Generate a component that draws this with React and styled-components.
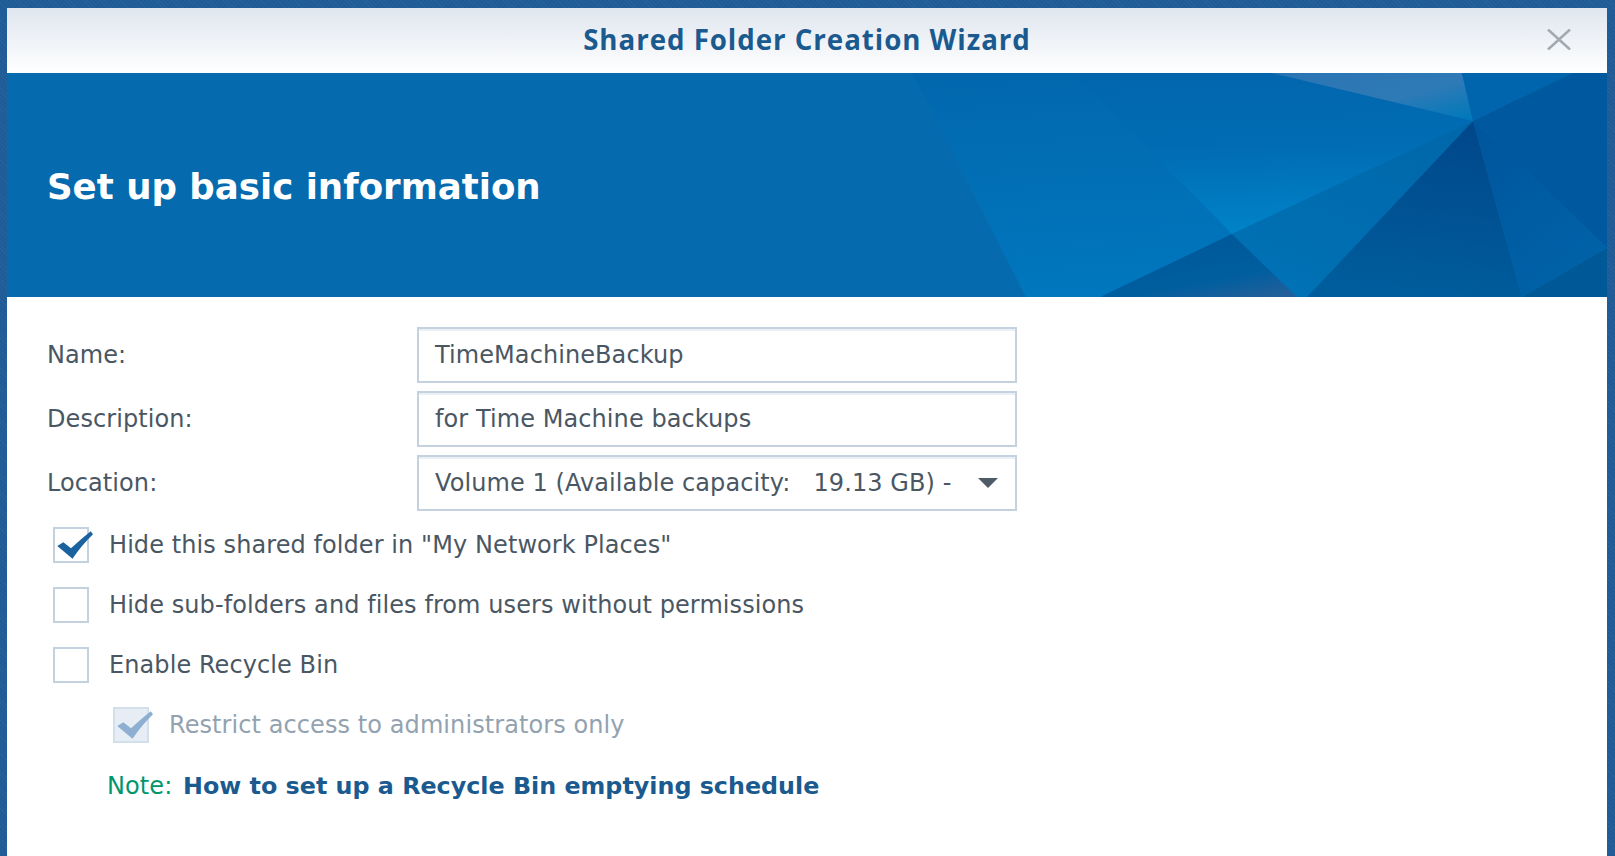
import React from "react";
import styled, { createGlobalStyle } from "styled-components";

const GlobalStyle = createGlobalStyle`
  html, body {
    margin: 0;
    height: 100%;
    overflow: hidden;
  }

  body {
    background-color: #1f5b96;
    background-image: repeating-linear-gradient(45deg, rgba(255,255,255,0.04) 0 1px, transparent 1px 3px);
    font-family: "DejaVu Sans", Verdana, sans-serif;
  }
`;

function BannerArt() {
  return (
    <Art viewBox="0 0 1600 224" preserveAspectRatio="none">
      <defs>
        <linearGradient id="leftFacet" x1="0" y1="0" x2="0.15" y2="1">
          <stop offset="0" stopColor="#0267ad" />
          <stop offset="1" stopColor="#0077be" />
        </linearGradient>
        <linearGradient id="upperFacet" x1="0.55" y1="0" x2="0.62" y2="1">
          <stop offset="0" stopColor="#0266ad" />
          <stop offset="0.45" stopColor="#006cb4" />
          <stop offset="1" stopColor="#0084c9" />
        </linearGradient>
        <linearGradient id="glintFacet" x1="0" y1="0" x2="1" y2="0.9">
          <stop offset="0" stopColor="#2a74b3" />
          <stop offset="0.6" stopColor="#2e7ab6" />
          <stop offset="1" stopColor="#0279ba" />
        </linearGradient>
        <linearGradient id="midFacet" x1="0.8" y1="0" x2="0.2" y2="1">
          <stop offset="0" stopColor="#0067aa" />
          <stop offset="1" stopColor="#0072b5" />
        </linearGradient>
        <linearGradient id="darkFacet" x1="0.6" y1="0" x2="0.45" y2="1">
          <stop offset="0" stopColor="#00478a" />
          <stop offset="1" stopColor="#005d9d" />
        </linearGradient>
        <linearGradient id="lowFacet" x1="0.2" y1="0" x2="0.8" y2="1">
          <stop offset="0" stopColor="#005699" />
          <stop offset="0.7" stopColor="#005e9f" />
          <stop offset="1" stopColor="#1f5f9b" />
        </linearGradient>
        <linearGradient id="rightFacet" x1="0" y1="0" x2="0.6" y2="1">
          <stop offset="0" stopColor="#00559c" />
          <stop offset="1" stopColor="#0062a8" />
        </linearGradient>
      </defs>
      <polygon points="905,0 1600,0 1600,224 1019,224" fill="url(#leftFacet)" />
      <polygon points="1066,0 1265,0 1466,48 1225,161" fill="url(#upperFacet)" />
      <polygon points="1265,0 1455,0 1466,48" fill="url(#glintFacet)" />
      <polygon points="1455,0 1566,0 1466,48" fill="#0065ad" />
      <polygon points="1566,0 1600,0 1600,175 1466,48" fill="#00589f" />
      <polygon points="1466,48 1225,161 1290,224 1300,224" fill="url(#midFacet)" />
      <polygon points="1466,48 1300,224 1515,224" fill="url(#darkFacet)" />
      <polygon points="1466,48 1600,175 1515,224" fill="url(#rightFacet)" />
      <polygon points="1600,175 1600,224 1515,224" fill="#005896" />
      <polygon points="1225,161 1093,224 1290,224" fill="url(#lowFacet)" />
    </Art>
  );
}

function CheckMark({ $muted }) {
  return (
    <Tick viewBox="0 0 40 36">
      <path
        d="M4.3 19 L10.3 15.2 L18 21.2 Q28 12 37.7 4.2 L40 7.3 Q28 19 19.5 31.8 Z"
        fill={$muted ? "#8eafd2" : "#1b639f"}
      />
    </Tick>
  );
}

function Option({ checked, disabled, nested, children }) {
  return (
    <OptionRow $nested={nested}>
      <Box $disabled={disabled}>{checked && <CheckMark $muted={disabled} />}</Box>
      <OptionLabel $disabled={disabled}>{children}</OptionLabel>
    </OptionRow>
  );
}

export default function App() {
  return (
    <>
      <GlobalStyle />
      <Desktop>
        <Wizard>
          <TitleBar>
            <Title>Shared Folder Creation Wizard</Title>
            <CloseButton aria-label="Close">
              <svg width="24" height="21" viewBox="0 0 24 21">
                <path d="M1 0.5 L23 20.5 M23 0.5 L1 20.5" stroke="#a4a9af" strokeWidth="2.6" fill="none" />
              </svg>
            </CloseButton>
          </TitleBar>

          <Banner>
            <BannerArt />
            <BannerTitle>Set up basic information</BannerTitle>
          </Banner>

          <Form>
            <Fields>
              <FieldRow>
                <FieldLabel>Name:</FieldLabel>
                <TextBox>TimeMachineBackup</TextBox>
              </FieldRow>
              <FieldRow>
                <FieldLabel>Description:</FieldLabel>
                <TextBox>for Time Machine backups</TextBox>
              </FieldRow>
              <FieldRow>
                <FieldLabel>Location:</FieldLabel>
                <TextBox>
                  <span>Volume 1 (Available capacity:&nbsp;&nbsp; 19.13 GB) -</span>
                  <Arrow />
                </TextBox>
              </FieldRow>
            </Fields>

            <Options>
              <Option checked>Hide this shared folder in "My Network Places"</Option>
              <Option>Hide sub-folders and files from users without permissions</Option>
              <Option>Enable Recycle Bin</Option>
              <Option checked disabled nested>
                Restrict access to administrators only
              </Option>
            </Options>

            <Note>
              <NoteTag>Note:</NoteTag> <NoteLink>How to set up a Recycle Bin emptying schedule</NoteLink>
            </Note>
          </Form>
        </Wizard>
      </Desktop>
    </>
  );
}

const Desktop = styled.div`
  box-sizing: border-box;
  height: 100vh;
  padding: 8px 8px 0 7px;
`;

const Wizard = styled.main`
  display: flex;
  flex-direction: column;
  height: 100%;
  background: #fff;
`;

const TitleBar = styled.header`
  position: relative;
  display: flex;
  align-items: center;
  justify-content: center;
  height: 65px;
  flex-shrink: 0;
  padding-bottom: 4px;
  box-sizing: border-box;
  background: linear-gradient(#dfe6ef, #ffffff);
`;

const Title = styled.h1`
  margin: 0;
  font-family: "Open Sans", sans-serif;
  font-size: 27.7px;
  font-weight: 700;
  letter-spacing: 0.95px;
  color: #1b5a8f;
`;

const CloseButton = styled.button`
  position: absolute;
  top: 21px;
  right: 36px;
  display: flex;
  padding: 0;
  border: none;
  background: none;
`;

const Banner = styled.section`
  position: relative;
  display: flex;
  align-items: center;
  height: 224px;
  flex-shrink: 0;
  padding: 2px 0 0 40px;
  box-sizing: border-box;
  background: #066aae;
`;

const Art = styled.svg`
  position: absolute;
  inset: 0;
  width: 100%;
  height: 100%;
`;

const BannerTitle = styled.h2`
  position: relative;
  margin: 0;
  font-size: 35.6px;
  font-weight: 700;
  color: #fff;
`;

const Form = styled.form`
  display: flex;
  flex-direction: column;
  padding: 30px 0 0 41px;
  font-size: 24px;
  letter-spacing: 0.08px;
  color: #4a5763;
`;

const Fields = styled.div`
  display: flex;
  flex-direction: column;
  gap: 8px;
`;

const FieldRow = styled.div`
  display: grid;
  grid-template-columns: 369px 600px;
  align-items: center;
`;

const FieldLabel = styled.label`
  margin-left: -1px;
`;

const TextBox = styled.div`
  box-sizing: border-box;
  display: flex;
  align-items: center;
  justify-content: space-between;
  height: 56px;
  padding: 0 17px 0 16px;
  border: 2px solid #c4d2e0;
  box-shadow: inset 0 2px 0 #eaf0f5;
  white-space: nowrap;
`;

const Arrow = styled.i`
  width: 0;
  height: 0;
  border-left: 10px solid transparent;
  border-right: 10px solid transparent;
  border-top: 10px solid #4f5c68;
`;

const Options = styled.div`
  display: flex;
  flex-direction: column;
  gap: 24px;
  margin: 16px 0 0 5px;
`;

const OptionRow = styled.div`
  display: flex;
  align-items: center;
  gap: 20px;
  height: 36px;
  margin-left: ${({ $nested }) => ($nested ? "60px" : "0")};
`;

const Box = styled.span`
  position: relative;
  box-sizing: border-box;
  flex-shrink: 0;
  width: 36px;
  height: 36px;
  border: 2px solid ${({ $disabled }) => ($disabled ? "#d3e0ec" : "#c4d2e0")};
  background: ${({ $disabled }) => ($disabled ? "#e6edf5" : "#fff")};
`;

const Tick = styled.svg`
  position: absolute;
  top: -2px;
  left: -2px;
  width: 40px;
  height: 36px;
`;

const OptionLabel = styled.span`
  color: ${({ $disabled }) => ($disabled ? "#93a2b0" : "#4a5763")};
`;

const Note = styled.p`
  margin: 29px 0 0 59px;
  line-height: 28px;
`;

const NoteTag = styled.span`
  color: #00966c;
`;

const NoteLink = styled.a`
  margin-left: 3px;
  font-size: 23.8px;
  letter-spacing: 0;
  font-weight: 700;
  color: #1a5a8f;
`;
